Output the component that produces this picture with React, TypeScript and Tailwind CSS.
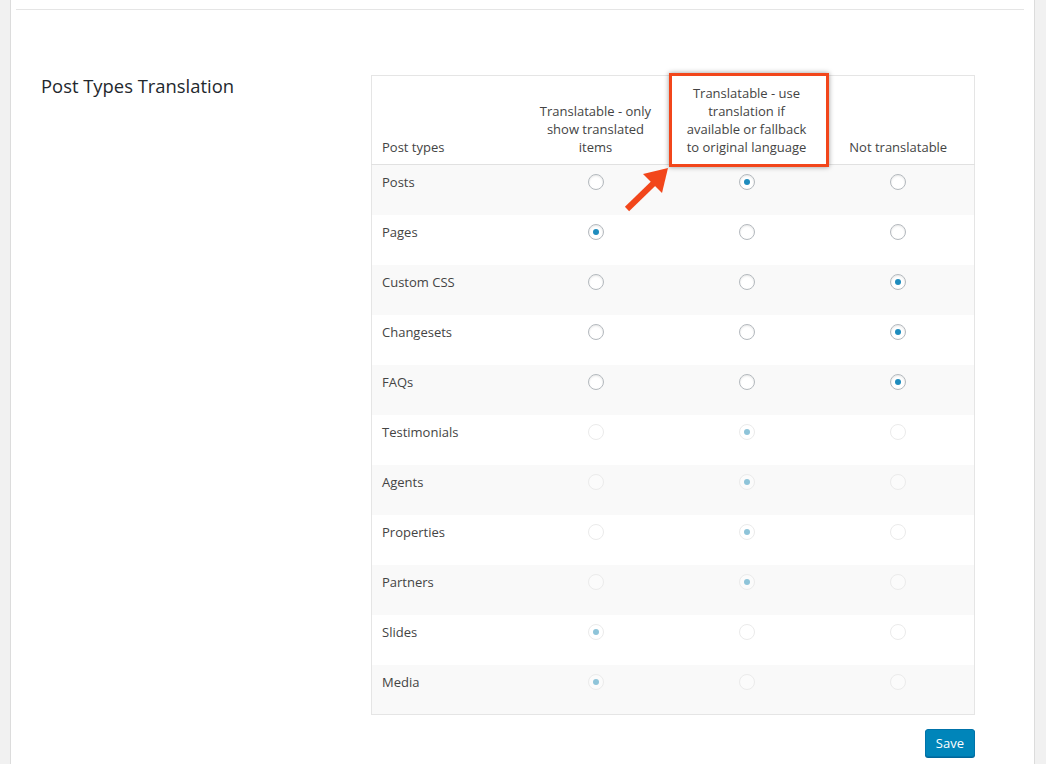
import React from "react";

type Row = { name: string; sel: number; disabled?: boolean };

const rows: Row[] = [
  { name: "Posts", sel: 1 },
  { name: "Pages", sel: 0 },
  { name: "Custom CSS", sel: 2 },
  { name: "Changesets", sel: 2 },
  { name: "FAQs", sel: 2 },
  { name: "Testimonials", sel: 1, disabled: true },
  { name: "Agents", sel: 1, disabled: true },
  { name: "Properties", sel: 1, disabled: true },
  { name: "Partners", sel: 1, disabled: true },
  { name: "Slides", sel: 0, disabled: true },
  { name: "Media", sel: 0, disabled: true },
];

function Radio({ checked, disabled }: { checked: boolean; disabled?: boolean }) {
  return (
    <span
      className={
        disabled
          ? "flex items-center justify-center w-[16px] h-[16px] rounded-full border border-[#ebebeb] bg-white/40"
          : "flex items-center justify-center w-[16px] h-[16px] rounded-full border border-[#b4b9be] bg-white shadow-[inset_0_1px_2px_rgba(0,0,0,0.1)]"
      }
    >
      {checked && (
        <span
          className={
            disabled
              ? "w-[6px] h-[6px] rounded-full bg-[#8ec4d9]"
              : "w-[6px] h-[6px] rounded-full bg-[#1e8cbe]"
          }
        />
      )}
    </span>
  );
}

export default function App() {
  return (
    <div
      className="w-[1046px] h-[764px] bg-[#f1f1f1] overflow-hidden text-[#444]"
      style={{ fontFamily: '"Open Sans", "Noto Sans", sans-serif' }}
    >
      <div className="ml-[10px] w-[1025px] h-full bg-white border-x border-[#dcdcdc] relative">
        <div className="pt-[9px] pl-[5px] pr-[10px]">
          <div className="border-t border-[#e5e5e5]" />
        </div>
        <div className="flex pt-[65px]">
          <div className="w-[360px] pl-[30px]">
            <h2 className="text-[18.4px] leading-[22px] text-[#23282d] font-normal">
              Post Types Translation
            </h2>
          </div>
          <div className="flex flex-col">
            <table className="w-[604px] border border-[#e5e5e5] border-collapse table-fixed text-[13px]">
              <thead>
                <tr className="h-[89px] border-b border-[#e1e1e1]">
                  <th className="w-[149px] align-bottom text-left font-normal px-[10px] pb-[8px] leading-[18px]">
                    Post types
                  </th>
                  <th className="w-[150px] align-bottom text-center font-normal px-[10px] pb-[8px] leading-[18px]">
                    Translatable - only show translated items
                  </th>
                  <th className="w-[152px] align-bottom text-center font-normal px-[10px] pb-[8px] leading-[18px]">
                    Translatable - use translation if available or fallback to original language
                  </th>
                  <th className="align-bottom text-center font-normal px-[10px] pb-[8px] leading-[18px]">
                    Not translatable
                  </th>
                </tr>
              </thead>
              <tbody>
                {rows.map((r, i) => (
                  <tr key={r.name} className={i % 2 === 0 ? "h-[50px] bg-[#f9f9f9]" : "h-[50px] bg-white"}>
                    <td className="align-top px-[10px] pt-[8px] leading-[18px]">{r.name}</td>
                    {[0, 1, 2].map((c) => (
                      <td key={c} className="align-top pt-[9px]">
                        <div className="flex justify-center">
                          <Radio checked={r.sel === c} disabled={r.disabled} />
                        </div>
                      </td>
                    ))}
                  </tr>
                ))}
              </tbody>
            </table>
            <div className="flex justify-end mt-[14px]">
              <button className="h-[28px] px-[10px] text-[13px] leading-[26px] text-white bg-[#0085ba] border border-[#0073aa] rounded-[3px] shadow-[0_1px_0_#006799]">
                Save
              </button>
            </div>
          </div>
        </div>
        {/* highlight box */}
        <div className="absolute left-[658px] top-[73px] w-[160px] h-[94px] border-[3px] border-[#f2461b] shadow-[0_0_5px_rgba(0,0,0,0.4)] pointer-events-none" />
        {/* arrow */}
        <svg
          className="absolute left-[600px] top-[160px] pointer-events-none"
          width="70"
          height="60"
          viewBox="0 0 70 60"
        >
          <line x1="16" y1="49" x2="48" y2="18" stroke="#f2461b" strokeWidth="6" strokeLinecap="butt" />
          <polygon points="57,8 32,14 51,33" fill="#f2461b" />
        </svg>
      </div>
    </div>
  );
}
